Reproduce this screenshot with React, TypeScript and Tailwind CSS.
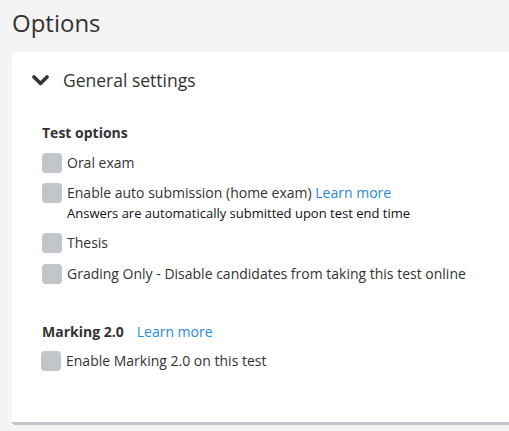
const font = { fontFamily: '"Open Sans", "Noto Sans", sans-serif' };

function Box() {
  return <span className="block w-5 h-5 shrink-0 rounded-[4px] bg-[#c2c6ca]" />;
}

function Option({ label, children }: { label: React.ReactNode; children?: React.ReactNode }) {
  return (
    <div className="flex items-start gap-[5px]">
      <Box />
      <div className="flex flex-col">
        <span className="text-[14px] leading-5 text-[#333]">{label}</span>
        {children}
      </div>
    </div>
  );
}

export default function App() {
  return (
    <div className="min-h-[431px] w-[509px] overflow-hidden bg-[#f4f4f4]" style={font}>
      <h1 className="h-[52px] pl-3 pt-[6px] text-[24px] leading-[34px] text-[#333]">Options</h1>
      <div className="ml-3 rounded-tl-md rounded-bl-sm bg-white border-b-[3px] border-[#c2c6ca] w-[520px]">
        <div className="h-[56px] flex items-center pl-[20px] gap-[14px]">
          <svg width="17" height="11" viewBox="0 0 17 11">
            <polyline points="2,2 8.5,8.5 15,2" fill="none" stroke="#333" strokeWidth="3.6" strokeLinecap="round" strokeLinejoin="round" />
          </svg>
          <span className="text-[17.5px] leading-7 text-[#333]">General settings</span>
        </div>
        <div className="pl-[30px] pt-[15px] pb-[51px]">
          <div className="text-[14px] leading-5 font-bold text-[#333]">Test options</div>
          <div className="mt-[10px] flex flex-col gap-[10px]">
            <Option label="Oral exam" />
            <Option
              label={
                <>
                  Enable auto submission (home exam){" "}
                  <a className="text-[#2a8ad8]">Learn more</a>
                </>
              }
            >
              <span className="text-[13px] leading-[18px] text-[#111] mt-[1px]">
                Answers are automatically submitted upon test end time
              </span>
            </Option>
            <div className="mt-[1px]">
              <Option label="Thesis" />
            </div>
            <div className="mt-[1px]">
              <Option label="Grading Only - Disable candidates from taking this test online" />
            </div>
          </div>
          <div className="mt-[38px] flex gap-[13px] text-[14px] leading-5">
            <span className="font-bold text-[#333]">Marking 2.0</span>
            <a className="text-[#2a8ad8]">Learn more</a>
          </div>
          <div className="mt-[9px] -ml-px">
            <Option label="Enable Marking 2.0 on this test" />
          </div>
        </div>
      </div>
    </div>
  );
}
